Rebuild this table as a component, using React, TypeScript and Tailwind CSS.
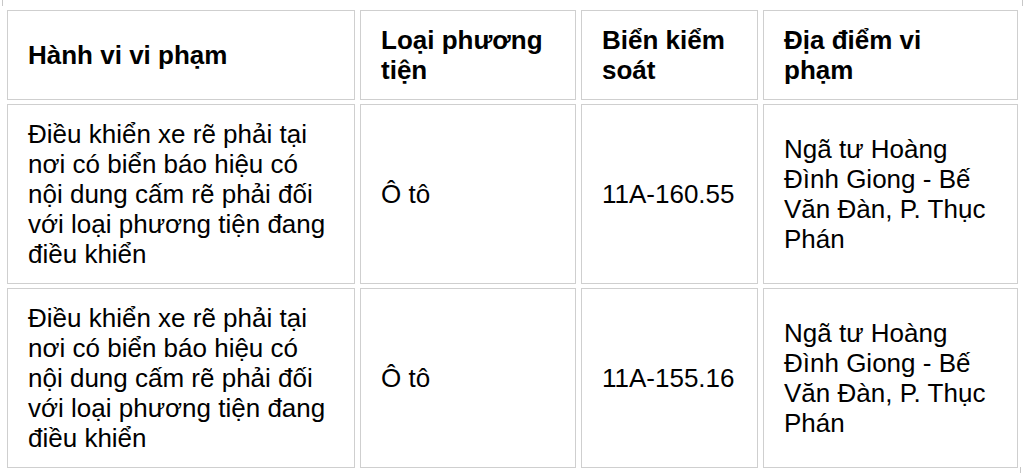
import React from "react";

type Row = { behavior: string; vehicle: string; plate: string; place: string };

const rows: Row[] = [
    {
        behavior: "Điều khiển xe rẽ phải tại nơi có biển báo hiệu có nội dung cấm rẽ phải đối với loại phương tiện đang điều khiển",
        vehicle: "Ô tô",
        plate: "11A-160.55",
        place: "Ngã tư Hoàng Đình Giong - Bế Văn Đàn, P. Thục Phán",
    },
    {
        behavior: "Điều khiển xe rẽ phải tại nơi có biển báo hiệu có nội dung cấm rẽ phải đối với loại phương tiện đang điều khiển",
        vehicle: "Ô tô",
        plate: "11A-155.16",
        place: "Ngã tư Hoàng Đình Giong - Bế Văn Đàn, P. Thục Phán",
    },
];

const cell = "border border-[#cfcfcf] px-5 py-[14px] align-middle text-left";

export default function App() {
    return (
        <div className="relative w-[1024px] h-[473px] bg-white overflow-hidden font-['Liberation_Sans',Arial,sans-serif] text-[26px] text-black">
            {/* bits of the outer frame peeking in at the corners */}
            <span className="absolute left-[2px] top-0 w-px h-[6px] bg-[#c8c8c8]" />
            <span className="absolute right-[1px] top-0 w-px h-[6px] bg-[#c8c8c8]" />
            <span className="absolute right-[3px] bottom-0 w-px h-[6px] bg-[#c8c8c8]" />

            <div className="pl-[2px] pt-[6px]">
                <table className="table-fixed border-separate border-spacing-x-[5px] border-spacing-y-[4px] leading-[30px]">
                    <colgroup>
                        <col className="w-[348px]" />
                        <col className="w-[216px]" />
                        <col className="w-[177px]" />
                        <col className="w-[255px]" />
                    </colgroup>
                    <thead>
                        <tr>
                            <th className={`${cell} font-bold`}>Hành vi vi phạm</th>
                            <th className={`${cell} font-bold`}>Loại phương tiện</th>
                            <th className={`${cell} font-bold`}>Biển kiểm soát</th>
                            <th className={`${cell} font-bold`}>Địa điểm vi phạm</th>
                        </tr>
                    </thead>
                    <tbody>
                        {rows.map((r, idx) => (
                            <tr key={idx}>
                                <td className={cell}>{r.behavior}</td>
                                <td className={cell}>{r.vehicle}</td>
                                <td className={cell}>{r.plate}</td>
                                <td className={cell}>{r.place}</td>
                            </tr>
                        ))}
                    </tbody>
                </table>
            </div>
        </div>
    );
}
